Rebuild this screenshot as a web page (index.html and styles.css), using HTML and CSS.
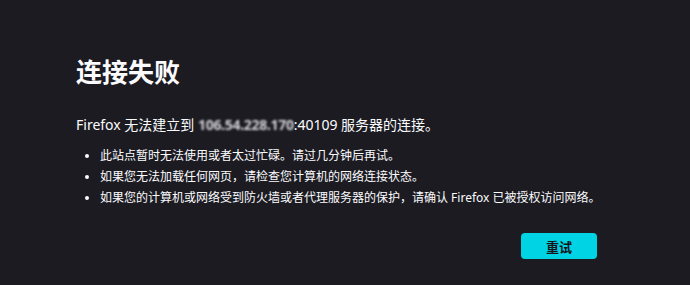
FILE: index.html
```html
<!DOCTYPE html>
<html lang="zh-CN">

<head>
	<meta charset="UTF-8" />
	<title>连接失败</title>
	<link rel="stylesheet" href="styles.css">
</head>

<body>
	<div class="container">
		<h1 class="title">连接失败</h1>
		<p class="desc">Firefox 无法建立到 <span class="host">106.54.228.170</span>:40109 服务器的连接。</p>
		<ul class="hints">
			<li>此站点暂时无法使用或者太过忙碌。请过几分钟后再试。</li>
			<li>如果您无法加载任何网页，请检查您计算机的网络连接状态。</li>
			<li>如果您的计算机或网络受到防火墙或者代理服务器的保护，请确认 Firefox 已被授权访问网络。</li>
		</ul>
		<div class="actions">
			<button class="retry">重试</button>
		</div>
	</div>
</body>

</html>
```

FILE: styles.css
```css
html,
body {
	margin: 0;
	height: 100%;
}

body {
	background: #1c1b22;
	color: #fbfbfe;
	font-family: "Noto Sans", "Noto Sans CJK SC", sans-serif;
	overflow: hidden;
}

.container {
	width: 521px;
	padding: 56px 0 0 76px;
}

.title {
	margin: 0;
	font-size: 26px;
	line-height: 32px;
	font-weight: bold;
}

.desc {
	margin: 27px 0 0;
	font-size: 14px;
	line-height: 20px;
}

.host {
	filter: blur(1.2px);
	color: #d4d4d8;
	font-weight: bold;
	letter-spacing: -0.3px;
}

.hints {
	margin: 10px 0 0;
	padding-left: 24px;
	font-size: 12px;
	line-height: 21px;
}

.hints li {
	white-space: nowrap;
}

.actions {
	display: flex;
	justify-content: flex-end;
	margin-top: 25px;
}

.retry {
	width: 76px;
	height: 26px;
	border: 0;
	border-radius: 4px;
	background: #00d3e3;
	color: #15141a;
	font-family: "Noto Sans CJK SC", sans-serif;
	font-size: 13px;
	font-weight: bold;
	padding: 0;
}
```
